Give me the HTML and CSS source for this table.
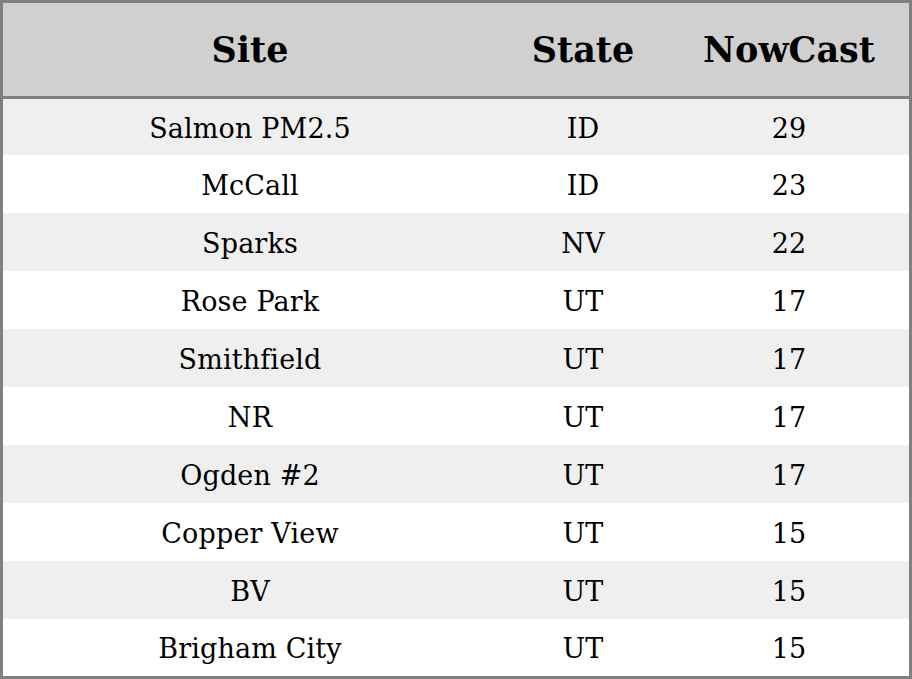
FILE: index.html
```html
<!DOCTYPE html>
<html>
<head>
<meta charset="utf-8">
<link rel="stylesheet" href="styles.css">
</head>
<body>
<table class="aq">
  <colgroup>
    <col class="c-site">
    <col class="c-state">
    <col class="c-now">
  </colgroup>
  <thead>
    <tr><th>Site</th><th>State</th><th>NowCast</th></tr>
  </thead>
  <tbody>
    <tr class="first"><td>Salmon PM2.5</td><td>ID</td><td>29</td></tr>
    <tr><td>McCall</td><td>ID</td><td>23</td></tr>
    <tr><td>Sparks</td><td>NV</td><td>22</td></tr>
    <tr><td>Rose Park</td><td>UT</td><td>17</td></tr>
    <tr><td>Smithfield</td><td>UT</td><td>17</td></tr>
    <tr><td>NR</td><td>UT</td><td>17</td></tr>
    <tr><td>Ogden #2</td><td>UT</td><td>17</td></tr>
    <tr><td>Copper View</td><td>UT</td><td>15</td></tr>
    <tr><td>BV</td><td>UT</td><td>15</td></tr>
    <tr class="last"><td>Brigham City</td><td>UT</td><td>15</td></tr>
  </tbody>
</table>
</body>
</html>
```
FILE: styles.css
```css
html, body {
  margin: 0;
  padding: 0;
  background: #ffffff;
}
.aq {
  width: 912px;
  border-collapse: separate;
  border-spacing: 0;
  border: 3px solid #808080;
  font-family: "DejaVu Serif", serif;
  color: #000;
  table-layout: fixed;
}
.c-site { width: 494px; }
.c-state { width: 172px; }
.c-now { width: 240px; }
.aq th {
  background: #d0d0d0;
  box-sizing: border-box;
  height: 96px;
  padding: 0;
  font-size: 35px;
  font-weight: bold;
  text-align: center;
  vertical-align: middle;
  border-bottom: 3px solid #808080;
}
.aq td {
  box-sizing: border-box;
  height: 58px;
  padding: 3px 0 0 0;
  font-size: 27px;
  line-height: 30px;
  text-align: center;
  vertical-align: middle;
  letter-spacing: 0.15px;
}
.aq tbody tr:nth-child(odd) td {
  background: #efefef;
}
.aq tr.first td { height: 56px; }
.aq tr.last td { height: 57px; }
```
